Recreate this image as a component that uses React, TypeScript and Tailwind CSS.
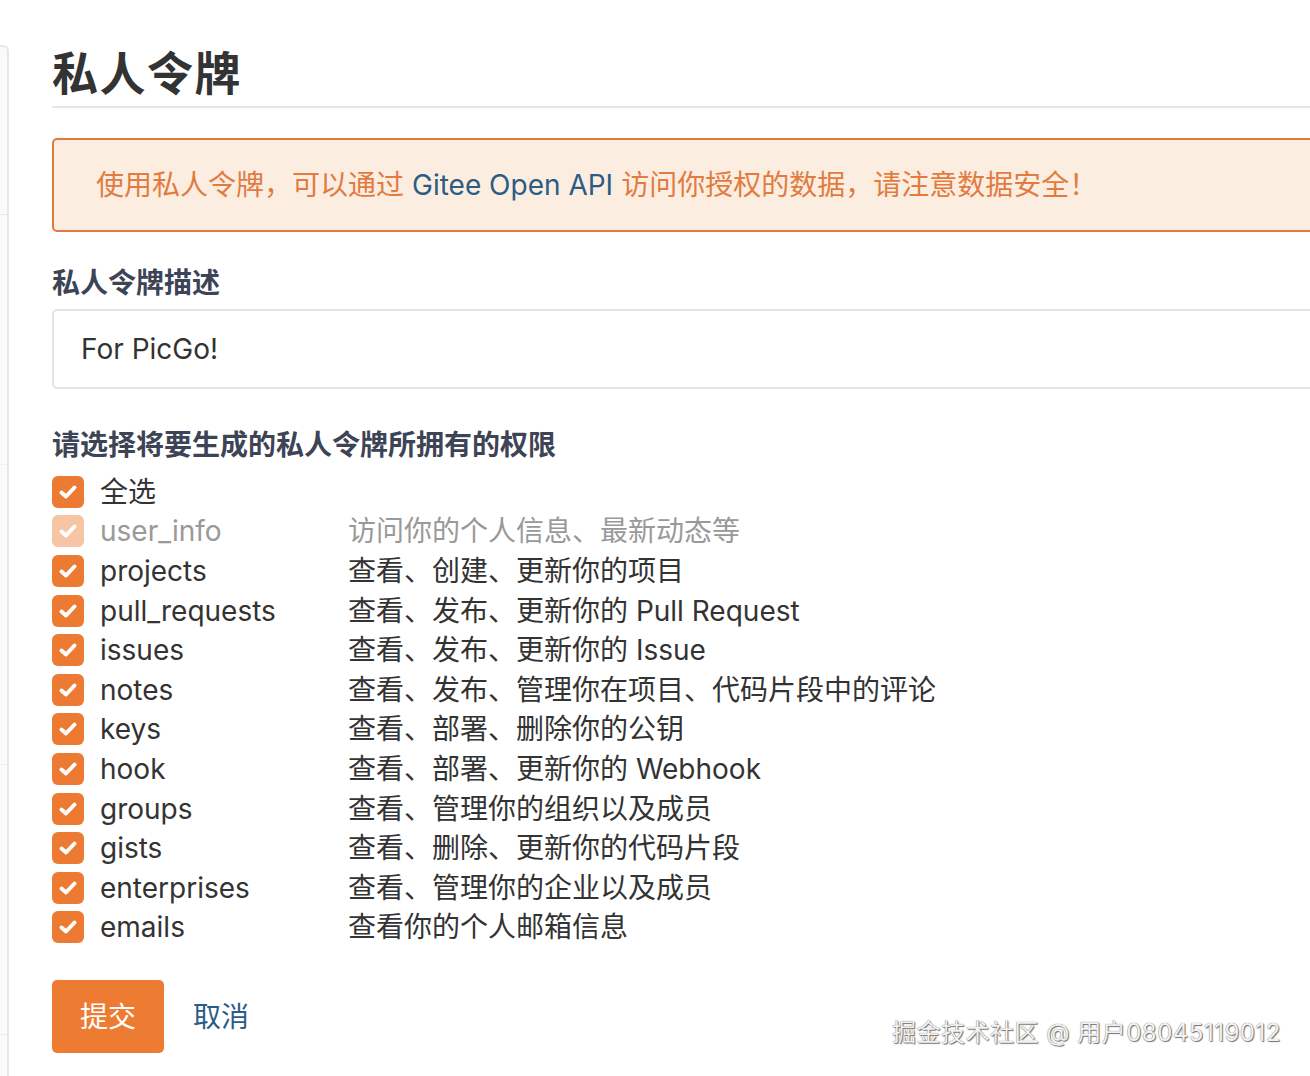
import React from "react"

const perms: { key: string; desc: string; disabled?: boolean }[] = [
  { key: "user_info", desc: "访问你的个人信息、最新动态等", disabled: true },
  { key: "projects", desc: "查看、创建、更新你的项目" },
  { key: "pull_requests", desc: "查看、发布、更新你的 Pull Request" },
  { key: "issues", desc: "查看、发布、更新你的 Issue" },
  { key: "notes", desc: "查看、发布、管理你在项目、代码片段中的评论" },
  { key: "keys", desc: "查看、部署、删除你的公钥" },
  { key: "hook", desc: "查看、部署、更新你的 Webhook" },
  { key: "groups", desc: "查看、管理你的组织以及成员" },
  { key: "gists", desc: "查看、删除、更新你的代码片段" },
  { key: "enterprises", desc: "查看、管理你的企业以及成员" },
  { key: "emails", desc: "查看你的个人邮箱信息" },
]

function CheckBox({ disabled }: { disabled?: boolean }) {
  return (
    <span
      className={
        "flex h-[32px] w-[32px] shrink-0 items-center justify-center rounded-[6px] " +
        (disabled ? "bg-[#f6c6a4]" : "bg-[#ec7a33]")
      }
    >
      <svg width="22" height="22" viewBox="0 0 22 22" fill="none">
        <polyline points="4.5,11.5 9,15.5 17.5,6.5" stroke="white" strokeWidth="4" strokeLinecap="round" strokeLinejoin="round" />
      </svg>
    </span>
  )
}

export default function App() {
  return (
    <div className="relative h-[1076px] w-[1310px] overflow-hidden bg-white font-['Inter','Noto_Sans_CJK_SC',sans-serif] text-[#333]">
      <div className="flex h-full">
        {/* sidebar edge */}
        <div className="mt-[45px] flex h-[1031px] w-[9px] shrink-0 flex-col rounded-tr-[6px] border-r-2 border-t-2 border-[#e6e6e6] bg-[#fafafa]">
          <div className="h-[168px] border-b border-[#e8e8e8]" />
          <div className="h-[250px] border-b border-[#f0f0f0]" />
          <div className="h-[300px] border-b border-[#ededed]" />
          <div className="h-[270px] border-b border-[#ededed]" />
        </div>

        {/* main */}
        <div className="ml-[43px] w-[1400px] shrink-0">
          <div className="border-b-2 border-[#e6e6e6] pb-[6px] pt-[40px]">
            <h1 className="font-['Noto_Sans_CJK_SC',sans-serif] text-[46px] font-bold leading-[60px] tracking-[1.5px] text-[#333]">私人令牌</h1>
          </div>

          <div className="mt-[30px] flex h-[94px] items-center rounded-[5px] border-2 border-[#e07a3e] bg-[#fcede1] pl-[42px] text-[28px] text-[#e17b40]">
            <span>使用私人令牌，可以通过</span>
            <span className="mx-[8px] text-[#2c5c85]">Gitee Open API</span>
            <span>访问你授权的数据，请注意数据安全！</span>
          </div>

          <div className="mt-[31px] text-[28px] font-bold leading-[40px] text-[#3d4455]">私人令牌描述</div>
          <div className="mt-[6px] flex h-[80px] items-center rounded-[5px] border-2 border-[#e3e3e3] pl-[27px] text-[28px] text-[#333]">
            For PicGo!
          </div>

          <div className="mt-[36px] text-[28px] font-bold leading-[40px] text-[#3d4455]">请选择将要生成的私人令牌所拥有的权限</div>

          <div className="mt-[7px] flex flex-col">
            <div className="flex h-[39.6px] items-center">
              <CheckBox />
              <span className="ml-[16px] text-[28px] text-[#333]">全选</span>
            </div>
            {perms.map((p) => (
              <div key={p.key} className="flex h-[39.6px] items-center">
                <CheckBox disabled={p.disabled} />
                <span className={"ml-[16px] w-[248px] text-[28px] " + (p.disabled ? "text-[#999]" : "text-[#333]")}>{p.key}</span>
                <span className={"text-[28px] " + (p.disabled ? "text-[#999]" : "text-[#333]")}>{p.desc}</span>
              </div>
            ))}
          </div>

          <div className="mt-[33px] flex items-center">
            <button className="flex h-[73px] w-[112px] items-center justify-center rounded-[5px] bg-[#ee7b32] text-[28px] text-white">提交</button>
            <button className="ml-[29px] text-[28px] text-[#2c5c85]">取消</button>
          </div>
        </div>
      </div>

      <div className="absolute left-[892px] top-[1016px] text-[24px] leading-[34px] tracking-[0.5px] text-[#f2f2f2] [text-shadow:0_0_1px_#555,1px_1px_1px_#777]">
        掘金技术社区 @ 用户08045119012
      </div>
    </div>
  )
}
